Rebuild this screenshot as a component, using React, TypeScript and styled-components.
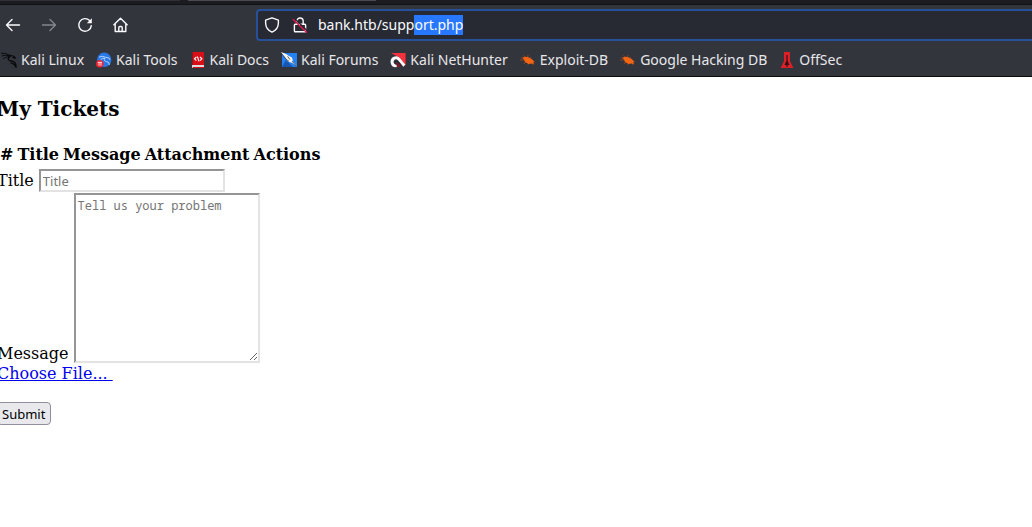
import React, { useEffect, useRef } from 'react';
import styled, { createGlobalStyle } from 'styled-components';

const GlobalStyle = createGlobalStyle`
  * { box-sizing: border-box; }
  html { background: #fff; }
  body { margin: 0; overflow-x: hidden; color: #000; font: 16px/19px "DejaVu Serif", serif; }
`;

const Chrome = styled.header`
  background: #33353d;
  border-bottom: 1px solid #0c0c0e;
  color: #fbfbfe;
  font: 14px/20px "Noto Sans", sans-serif;
`;

const TabStrip = styled.div`
  display: flex;
  gap: 8px;
  height: 5px;
  background: #1b1c20;
  border-bottom: 1px solid #101114;
`;

const Tab = styled.div<{ $active?: boolean }>`
  width: ${({ $active }) => ($active ? 188 : 180)}px;
  height: 1px;
  background: ${({ $active }) => ($active ? '#4a4b55' : '#303137')};
`;

const Toolbar = styled.div`
  display: flex;
  align-items: center;
  padding: 4px 0 4px 3px;
`;

const NavButtons = styled.nav`
  display: flex;
  gap: 16px;
  width: 253px;
`;

const NavButton = styled.button`
  display: grid;
  place-items: center;
  width: 20px;
  height: 20px;
  padding: 0;
  border: 0;
  background: none;
  color: #fbfbfe;
  &:disabled { color: #85868b; }
`;

const AddressBar = styled.div`
  flex: 1;
  display: flex;
  align-items: center;
  gap: 10px;
  height: 32px;
  padding-left: 6px;
  border: 2px solid #27509b;
  border-right: 0;
  border-radius: 4px 0 0 4px;
  background: #272933;
`;

const SiteStatus = styled.div`
  display: flex;
  gap: 12px;
`;

const AddressInput = styled.input`
  flex: 1;
  min-width: 0;
  height: 20px;
  padding: 0;
  border: 0;
  outline: 0;
  background: none;
  color: #fbfbfe;
  caret-color: transparent;
  font: 14px/20px "Noto Sans", sans-serif;
  &::selection { background: #2878ff; color: #fbfbfe; }
`;

const Bookmarks = styled.nav`
  display: flex;
  gap: 12px;
  height: 31px;
  padding: 5px 0 0 1px;
`;

const Bookmark = styled.a`
  display: flex;
  align-items: center;
  gap: 4px;
  height: 20px;
  color: #e7e7ea;
  text-decoration: none;
  white-space: nowrap;
  svg { flex: none; }
`;

const Page = styled.main`
  margin-left: -3px;
  padding-top: 20px;
`;

const Heading = styled.h2`
  margin: 0 0 21px;
  font-size: 20px;
  line-height: 24px;
`;

const Tickets = styled.table`
  margin-bottom: 2px;
  border-spacing: 2px;
  th { padding: 1px; line-height: 19px; }
`;

const Field = styled.div<{ $align: 'baseline' | 'flex-end' }>`
  display: flex;
  align-items: ${({ $align }) => $align};
  gap: 5px;
  margin-bottom: 1px;
`;

const TitleInput = styled.input`
  width: 186px;
  height: 23px;
  padding: 1px 2px;
  border: 2px solid;
  border-color: #959595 #e3e3e3 #e3e3e3 #959595;
  font: 13px/18px "Noto Sans", sans-serif;
  &::placeholder { color: #757575; }
`;

const MessageInput = styled.textarea`
  display: block;
  width: 186px;
  height: 170px;
  padding: 2px;
  border: 2px solid;
  border-color: #959595 #e3e3e3 #e3e3e3 #959595;
  font: 12px/17px "Noto Sans Mono", "DejaVu Sans Mono", monospace;
  &::placeholder { color: #757575; }
`;

const FileLink = styled.a`
  display: block;
  width: fit-content;
  margin-bottom: 19px;
  color: #0000ee;
  text-decoration: underline;
  white-space: pre;
`;

const SubmitButton = styled.button`
  height: 23px;
  padding: 0 5px 0 4px;
  border: 1px solid #8f8f9d;
  border-radius: 4px;
  background: #e9e9ed;
  color: #000;
  font: 13px/18px "Noto Sans", sans-serif;
`;

const stroke = { fill: 'none', stroke: 'currentColor', strokeWidth: 1.4, strokeLinecap: 'round', strokeLinejoin: 'round' } as const;

const BackIcon = () => (
  <svg width="16" height="16" viewBox="0 0 16 16" {...stroke}><path d="M7 2.5 1.5 8 7 13.5M1.5 8h13" /></svg>
);
const ForwardIcon = () => (
  <svg width="16" height="16" viewBox="0 0 16 16" {...stroke}><path d="M9 2.5 14.5 8 9 13.5M14.5 8h-13" /></svg>
);
const ReloadIcon = () => (
  <svg width="16" height="16" viewBox="0 0 16 16" {...stroke}>
    <path d="M12.6 3.6A6.3 6.3 0 1 0 14.3 8.6" />
    <path d="M14.8 1.2v5H9.8z" fill="currentColor" stroke="none" />
  </svg>
);
const HomeIcon = () => (
  <svg width="16" height="16" viewBox="0 0 16 16" {...stroke}>
    <path d="M.9 7.8 7.5 1.2l6.6 6.6M2.2 6.8v7.7h10.6V6.8M5.8 14.2v-3.7q0-1 1-1h1.4q1 0 1 1v3.7" />
  </svg>
);
const ShieldIcon = () => (
  <svg width="16" height="16" viewBox="0 0 16 16" {...stroke}>
    <path d="M8 .8 14.4 3.2v2.6c0 4-2.5 7.7-6.4 9.4-3.9-1.7-6.4-5.4-6.4-9.4V3.2z" />
  </svg>
);
const InsecureIcon = () => (
  <svg width="16" height="16" viewBox="0 0 16 16" {...stroke}>
    <path d="M4.8 7V4.2a3.2 3.2 0 0 1 6.4 0V7M3.2 7.2h9.6q.8 0 .8.8v6q0 .8-.8.8H3.2q-.8 0-.8-.8V8q0-.8.8-.8z" />
    <path d="M2.4 1.4 15.6 14" stroke="#272933" strokeWidth="1.4" />
    <path d="M1.2 2.5 14.5 15.2" stroke="#e2164c" />
  </svg>
);

const KaliIcon = () => (
  <svg width="16" height="16" viewBox="0 0 16 16">
    <g fill="none" stroke="#08090b" strokeLinecap="round" strokeLinejoin="round">
      <path d="M.3 1.2Q4.5.7 8.6 3.2M1 3.8Q5 2.3 8.8 4M2.6 6.4Q5.4 4.4 8.8 4.6" strokeWidth=".9" />
      <path d="M8.4 3.4 13 4.3 14.6 6.2 11.8 5.6" strokeWidth="1.1" />
      <path d="M8.8 4.6C6 6.6 7.2 8.7 10.4 9 13.6 9.4 15.2 11.6 15 15.4 14 12.4 12.4 11.4 9.8 10.8" strokeWidth="1.3" />
    </g>
  </svg>
);
const ToolsIcon = () => (
  <svg width="16" height="16" viewBox="0 0 16 16">
    <circle cx="8.2" cy="7.8" r="7.2" fill="#2878e8" />
    <path d="M3 5.2Q6.4 3.4 9.4 5.2L13 6l.8 1.8M4.6 7.6Q6.5 5.7 9 6.3 7 9 10.7 9.6q3 .6 2.6 3.4" fill="none" stroke="#c4dcfb" strokeWidth=".9" />
    <circle cx="3.8" cy="11.8" r="3.8" fill="#ed2635" />
    <path d="M1.8 10.4h4.2M3 10.4v3.4M5 10.4v3.4" stroke="#fff" strokeWidth=".8" fill="none" />
  </svg>
);
const DocsIcon = () => (
  <svg width="16" height="16" viewBox="0 0 16 16">
    <path d="M2 1q0-1 1-1h11v13H2z" fill="#d90f18" />
    <path d="M2 1q0-1 1-1v13H2z" fill="#90151d" />
    <path d="M2 13h12v3H3q-1 0-1-1z" fill="#ddd" /><path d="M3 15h11v1H3z" fill="#d90f18" />
    <path d="M6.4 5 4.5 6.8l1.9 1.8M10 5l1.9 1.8L10 8.6M7.4 4.5 9 9.3" fill="none" stroke="#fff" strokeWidth="1.1" />
  </svg>
);
const ForumsIcon = () => (
  <svg width="16" height="16" viewBox="0 0 16 16">
    <path d="M1 1h15v14H1z" fill="#2281f3" /><path d="M1 15 5 8l7 7z" fill="#1856b1" />
    <path d="M0 0 5 2 8 4l3 1.4 1 4L16 14.6 11.4 11 7 9.6 4.4 6z" fill="#f5f5ee" />
    <path d="M.4 1.6 5.6 7.6 8 9.4M6.6 4.4 9 7.6M11 9l4.4 5.4" fill="none" stroke="#35383e" strokeWidth=".8" />
  </svg>
);
const NetHunterIcon = () => (
  <svg width="16" height="16" viewBox="0 0 16 16">
    <path d="M1 1h14.6v12.6L8.4 5z" fill="#f5313d" /><path d="M2 11h11l-3 4H2z" fill="#7d1a29" />
    <path d="M6.6 13.6C1.6 14.4.6 8 4.4 6.2 8.6 4.4 9.6 9 14.4 13.6" fill="none" stroke="#f8f8f8" strokeWidth="3" />
    <path d="M7.6 12.2C4.8 12.8 4 9.8 6 9 8 8.4 9.4 11.4 11.6 14" fill="none" stroke="#24262c" strokeWidth="1.1" />
  </svg>
);
const BugIcon = () => (
  <svg width="16" height="16" viewBox="0 0 16 16">
    <path d="M1 5.5 5 7M3.5 3.5 6 6M8 3l-.5 3M11 5 9.5 7M0 8l5-.2M4 12l2-3M8 13l1-3M13 13l-1-3M15 10l-3-1" stroke="#9b481e" strokeWidth=".8" />
    <path d="M2.4 5.8 5.4 4.8 8.4 5.2 12 7.2 14.2 9.4 13.2 10 14 12.2 11.5 11.4 8.6 12 5 10 4 7.6z" fill="#f36512" />
  </svg>
);
const OffSecIcon = () => (
  <svg width="16" height="16" viewBox="0 0 16 16">
    <path d="M5 0h6v9l3.4 7H1.6L5 9z" fill="#dc2027" />
    <path d="M7.4 3h1.2v6l1.9 4H8.6v2H7.4v-2H5.5l1.9-4z" fill="#331016" />
  </svg>
);

const bookmarks = [
  { label: 'Kali Linux', Icon: KaliIcon },
  { label: 'Kali Tools', Icon: ToolsIcon },
  { label: 'Kali Docs', Icon: DocsIcon },
  { label: 'Kali Forums', Icon: ForumsIcon },
  { label: 'Kali NetHunter', Icon: NetHunterIcon },
  { label: 'Exploit-DB', Icon: BugIcon },
  { label: 'Google Hacking DB', Icon: BugIcon },
  { label: 'OffSec', Icon: OffSecIcon },
];

export default function App() {
  const address = useRef<HTMLInputElement>(null);

  // Keep the completed part of the address selected, ready to be typed over.
  useEffect(() => {
    address.current?.focus();
    address.current?.setSelectionRange(13, 20);
  }, []);

  return (
    <>
      <GlobalStyle />
      <Chrome>
        <TabStrip><Tab /><Tab $active /></TabStrip>
        <Toolbar>
          <NavButtons aria-label="Navigation">
            <NavButton aria-label="Back"><BackIcon /></NavButton>
            <NavButton aria-label="Forward" disabled><ForwardIcon /></NavButton>
            <NavButton aria-label="Reload"><ReloadIcon /></NavButton>
            <NavButton aria-label="Home"><HomeIcon /></NavButton>
          </NavButtons>
          <AddressBar>
            <SiteStatus>
              <ShieldIcon />
              <InsecureIcon />
            </SiteStatus>
            <AddressInput ref={address} aria-label="Address" defaultValue="bank.htb/support.php" spellCheck={false} />
          </AddressBar>
        </Toolbar>
        <Bookmarks aria-label="Bookmarks">
          {bookmarks.map(({ label, Icon }) => (
            <Bookmark key={label} href="#"><Icon />{label}</Bookmark>
          ))}
        </Bookmarks>
      </Chrome>
      <Page>
        <Heading>My Tickets</Heading>
        <Tickets>
          <thead>
            <tr><th>#</th><th>Title</th><th>Message</th><th>Attachment</th><th>Actions</th></tr>
          </thead>
        </Tickets>
        <form onSubmit={(event) => event.preventDefault()}>
          <Field $align="baseline">
            <label htmlFor="title">Title</label>
            <TitleInput id="title" placeholder="Title" />
          </Field>
          <Field $align="flex-end">
            <label htmlFor="message">Message</label>
            <MessageInput id="message" placeholder="Tell us your problem" />
          </Field>
          <FileLink href="#">{'Choose File... '}</FileLink>
          <SubmitButton type="submit">Submit</SubmitButton>
        </form>
      </Page>
    </>
  );
}
